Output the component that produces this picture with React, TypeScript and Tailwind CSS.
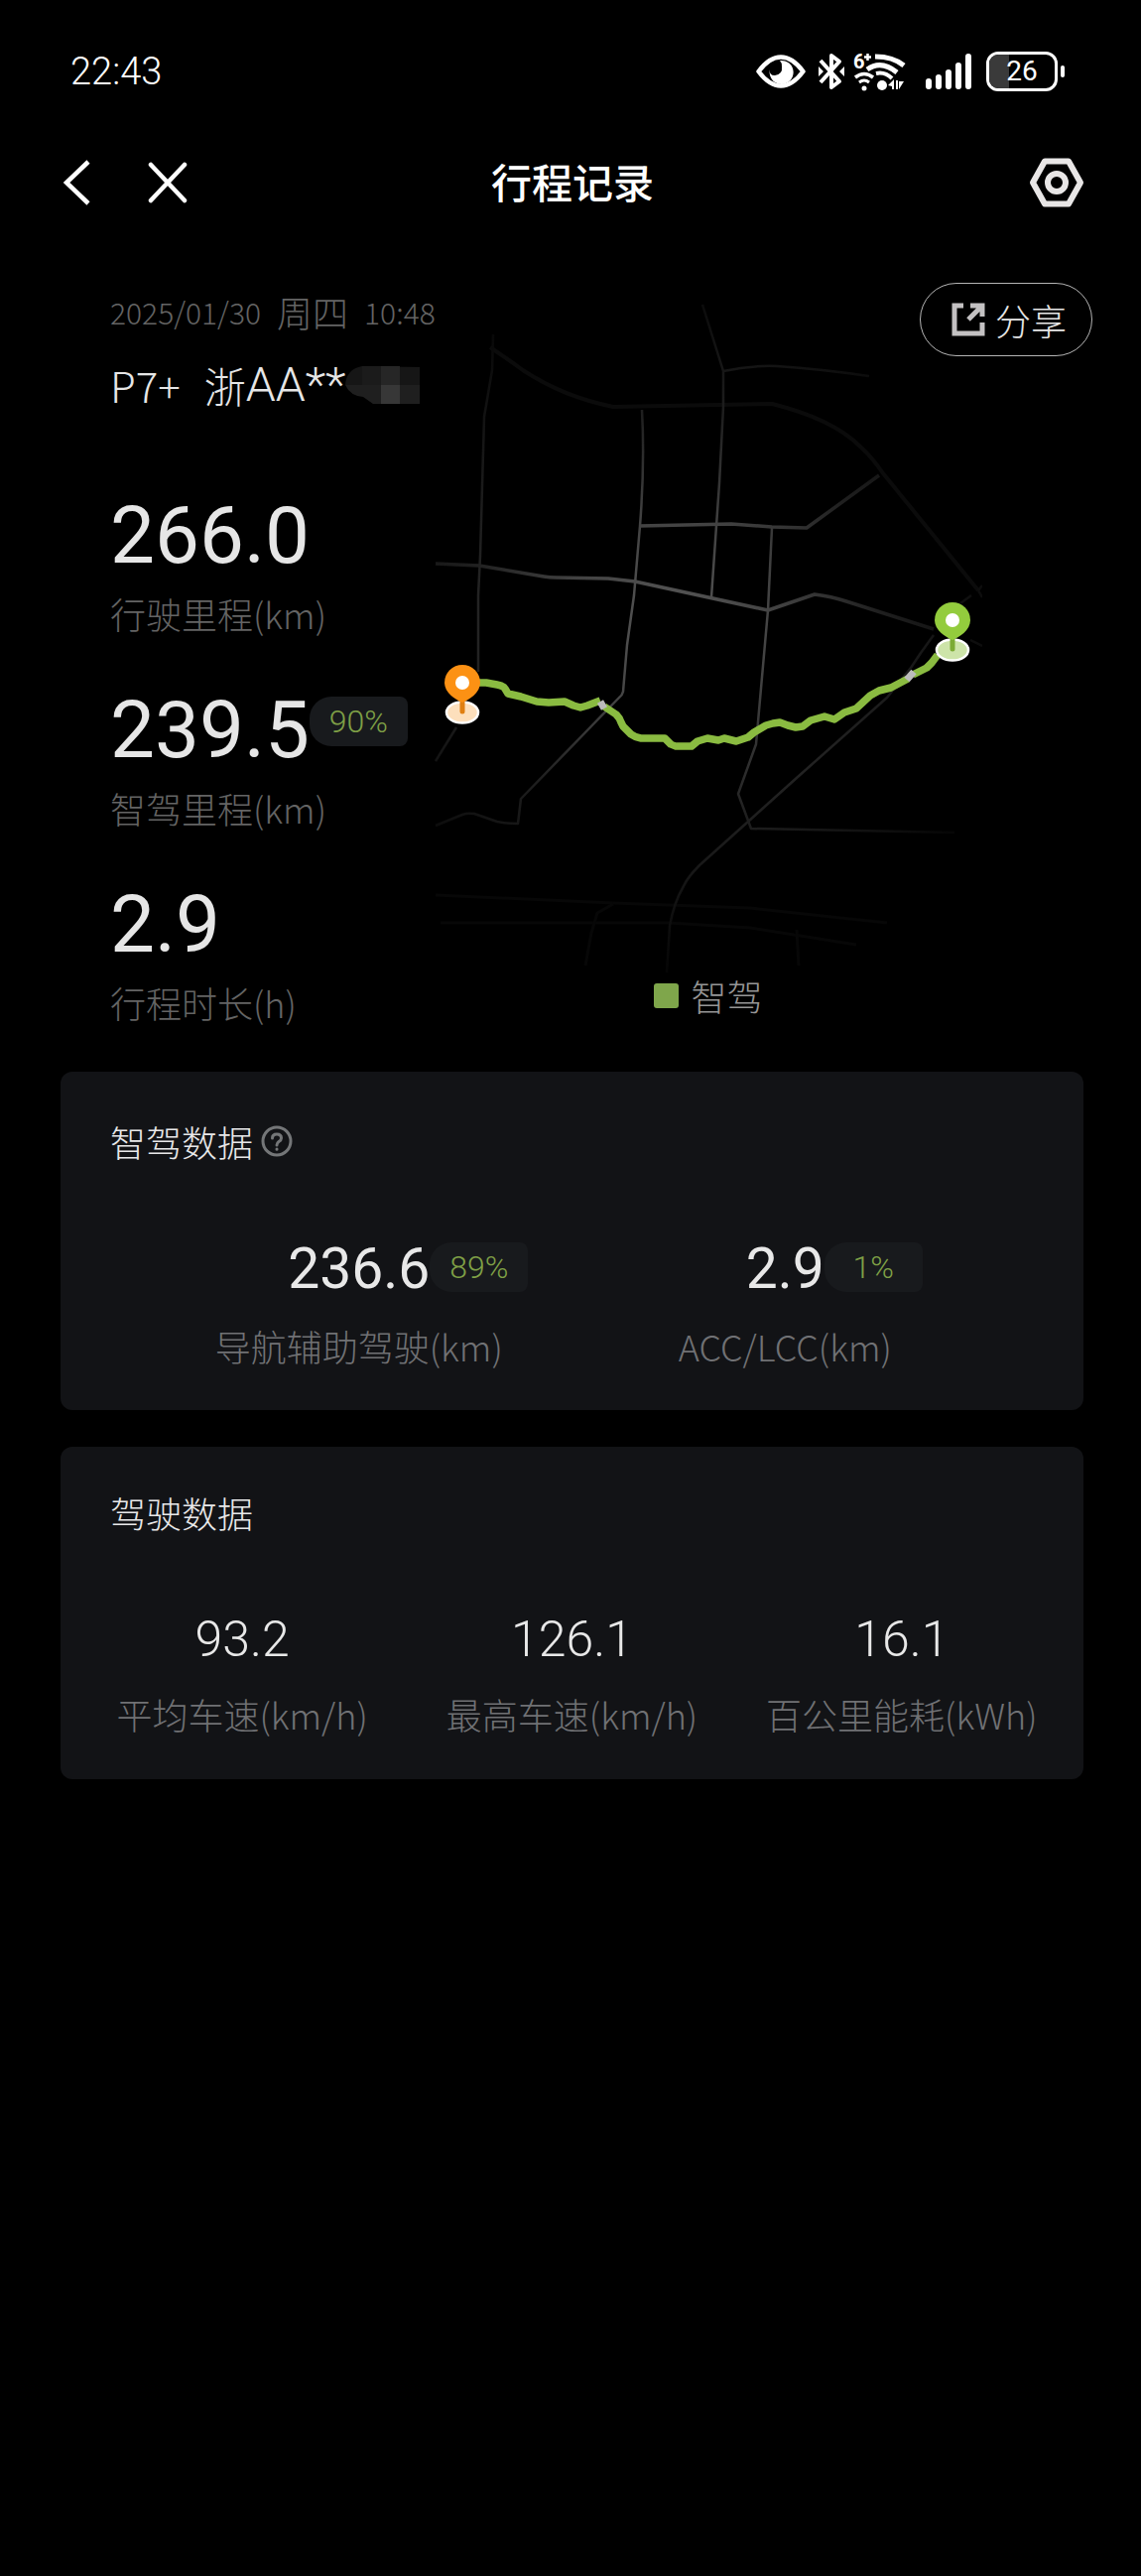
import React from 'react';
import { clsx } from 'clsx';

const cjk = "font-['Noto_Sans_CJK_SC','Noto_Sans',sans-serif]";
const roboto = "font-['Roboto','Noto_Sans_CJK_SC',sans-serif]";

const summary = [
  { value: '266.0', label: '行驶里程(km)' },
  { value: '239.5', label: '智驾里程(km)', percent: '90%' },
  { value: '2.9', label: '行程时长(h)' },
];

const assistStats = [
  { value: '236.6', label: '导航辅助驾驶(km)', percent: '89%' },
  { value: '2.9', label: 'ACC/LCC(km)', percent: '1%' },
];

const driveStats = [
  { value: '93.2', label: '平均车速(km/h)' },
  { value: '126.1', label: '最高车速(km/h)' },
  { value: '16.1', label: '百公里能耗(kWh)' },
];

const roads = [
  'M59 37L58 73L50 120L46 260L44 300L44 377',
  'M270 7L291 74L291 110L287 187L279 302',
  'M291 74Q318 68 345 69Q390 72 438 79',
  'M209 113Q212 167 207 230L201 300L194 350L190 397Q189 401 186 403L87 505L84 530Q72 530 63 528L40 520Q33 519 28 521L1 532',
  'M340 232L336 315L324 450L306 500L319 535L524 539',
  'M22 433L1 467',
  'M503 340L490 358L480 373L456 403L366 483L267 572Q255 584 251 593Q241 610 237 633L234 680',
  'M541 300L530 308M548 295L552 290M548 295L552 302M540 345L552 351',
];

const wideRoads = [
  'M207 230L299 228L340 231L375 232L448 179',
  'M1 268L45 270L110 281Q116 282 122 282L175 283L202 286L336 315L383 299Q400 301 415 306L503 334',
];

const ringRoad = 'M56 50Q74 62 89 73Q130 100 180 110L340 107Q401 122 429 150Q442 162 452 177L548 295';

const faintRoads = [
  'M1 602L180 610L318 615L456 630',
  'M6 630L235 630L318 635L425 652',
  'M180 611L164 620L158 640L152 673',
  'M365 637L367 673',
];

function EyeIcon() {
  return (
    <svg viewBox="0 0 50 34" className="h-[34px] w-[50px]">
      <path d="M2.5 17C10 7 17 2.5 25 2.5S40 7 47.500 17C40 27 33 31.500 25 31.500S10 27 2.500 17Z" fill="none" stroke="#fff" strokeWidth="4.500" strokeLinejoin="round" />
      <path d="M24 6A12 12 0 1 1 14 15Q13 21 19 21Q27 20 26 12Q26 8 24 6Z" fill="#fff" />
    </svg>
  );
}

function BluetoothIcon() {
  return (
    <svg viewBox="0 0 28 40" className="h-10 w-7" fill="none" stroke="#fff" strokeWidth="4" strokeLinejoin="round">
      <path d="M3 9L22 30L14 36V4L22 10L3 31" />
      <path d="M1 15L6 20L1 25ZM27 15L22 20L27 25Z" fill="#fff" stroke="none" />
    </svg>
  );
}

function WifiIcon() {
  return (
    <svg viewBox="-2 -6 57 52" className="h-[52px] w-[57px]" fill="none" stroke="#fff" strokeWidth="4">
      <text x="0" y="17" fill="#fff" stroke="none" fontSize="20" fontWeight="700" fontFamily="Roboto, sans-serif">6</text>
      <path d="M11 5.500H18M14.500 2V9" strokeWidth="2.500" />
      <path d="M22 5Q40 5 51 14" strokeWidth="5" />
      <path d="M14 18Q28 8 44 21" strokeWidth="5" />
      <path d="M23 22Q32 20 39 27" />
      <path d="M2 26Q11 19 20 26" strokeWidth="3.500" />
      <path d="M6 31Q11 27 16 31" strokeWidth="3" />
      <circle cx="11" cy="37" r="2.500" fill="#fff" stroke="none" />
      <circle cx="29" cy="34" r="5" fill="#fff" stroke="none" />
      <path d="M35 34L41 28V38H39V35ZM43 29H45V38H43ZM46 30H51L46 38Z" fill="#fff" stroke="none" />
    </svg>
  );
}

function SignalIcon() {
  return (
    <svg viewBox="0 0 47 38" className="h-[38px] w-[47px]" stroke="#fff" strokeWidth="6" strokeLinecap="round">
      <path d="M3 29V34M13 25V34M23 20V34M33 13V34M43 4V34" />
    </svg>
  );
}

function Battery() {
  return (
    <div className="flex items-center gap-[3px]">
      <div className="relative flex h-10 w-[72px] items-center justify-center overflow-hidden rounded-[12px] border-[3px] border-white">
        <span className="absolute inset-y-0 left-0 w-5 bg-[#3a3a3a]" />
        <span className={clsx('relative text-[28px] leading-none text-white', roboto)}>26</span>
      </div>
      <span className="h-3 w-1 rounded-full bg-white" />
    </div>
  );
}

function StatusBar() {
  return (
    <div className="flex h-36 items-center justify-between pr-[77px] pl-[71px]">
      <span className={clsx('text-[38px] leading-none font-light text-white', roboto)}>22:43</span>
      <div className="flex items-center">
        <EyeIcon />
        <span className="ml-3">
          <BluetoothIcon />
        </span>
        <span className="ml-1.5">
          <WifiIcon />
        </span>
        <span className="ml-[18px]">
          <SignalIcon />
        </span>
        <span className="ml-3.5">
          <Battery />
        </span>
      </div>
    </div>
  );
}

function Header() {
  return (
    <header className="grid h-20 grid-cols-[1fr_auto_1fr] items-center pr-[57px] pl-[61px]">
      <div className="flex items-center gap-14">
        <button aria-label="返回">
          <svg viewBox="0 0 32 46" className="h-[46px] w-8" fill="none" stroke="#fff" strokeWidth="4.500">
            <path d="M28 2L6 23L28 44" />
          </svg>
        </button>
        <button aria-label="关闭">
          <svg viewBox="0 0 40 42" className="h-[42px] w-10" fill="none" stroke="#fff" strokeWidth="4.500" strokeLinecap="round">
            <path d="M3 3L37 39M37 3L3 39" />
          </svg>
        </button>
      </div>
      <h1 className="pb-1 text-[41px] leading-none font-medium text-white">行程记录</h1>
      <button aria-label="设置" className="justify-self-end">
        <svg viewBox="0 0 56 50" className="h-[50px] w-14" fill="none" stroke="#e8e6e6" strokeWidth="6" strokeLinejoin="round">
          <path d="M16 3.500H40L52 25L40 46.500H16L4 25Z" />
          <circle cx="28" cy="25" r="9" />
        </svg>
      </button>
    </header>
  );
}

function PercentTag({ className, children }: { className: string; children: React.ReactNode }) {
  return (
    <span
      className={clsx(
        'absolute left-full flex h-[50px] w-[99px] items-center justify-center rounded-l-[22px] rounded-r-[8px] bg-[#181a1d] text-[32px] leading-none font-light text-[#7fa046]',
        roboto,
        className
      )}
    >
      {children}
    </span>
  );
}

function MapPin({ x, y, color, stem, base }: { x: number; y: number; color: string; stem: string; base: string }) {
  return (
    <g transform={`translate(${x} ${y})`}>
      <ellipse cx="0" cy="30" rx="16" ry="10.500" fill={base} stroke="#fff" strokeWidth="2.500" />
      <path d="M0 16V29" stroke={stem} strokeWidth="5" strokeLinecap="round" />
      <path d="M0 20C-7 17 -18 10 -18 0A18 18 0 0 1 18 0C18 10 7 17 0 20Z" fill={color} />
      <circle r="7" fill="#fff" />
    </g>
  );
}

function RouteMap() {
  return (
    <svg viewBox="0 0 552 680" className="w-full" fill="none" strokeLinejoin="round" role="img" aria-label="行程路线">
      <defs>
        <radialGradient id="roadFade" gradientUnits="userSpaceOnUse" cx="240" cy="325" r="350">
          <stop offset="0" stopColor="#565656" />
          <stop offset="0.300" stopColor="#424242" />
          <stop offset="0.600" stopColor="#1f1f1f" />
          <stop offset="1" stopColor="#060606" />
        </radialGradient>
      </defs>
      <path d={ringRoad} stroke="#0b0b0b" strokeWidth="4" />
      {faintRoads.map((d) => (
        <path key={d} d={d} stroke="#070707" strokeWidth="3" />
      ))}
      <g stroke="url(#roadFade)">
        {roads.map((d) => (
          <path key={d} d={d} strokeWidth="2.500" />
        ))}
        {wideRoads.map((d) => (
          <path key={d} d={d} strokeWidth="3.500" />
        ))}
      </g>
      <g stroke="#8abb41" strokeWidth="7.500">
        <path d="M38 388L52 388L63 390Q69 391 71 394L74 399L87 402L103 407L115 408L131 407L140 411L147 413L154 411L167 406" />
        <path d="M171 412L183 420Q187 424 188 428L190 432L198 440Q202 443 208 444L232 444L238 450Q240 451 243 452L259 452L265 447L275 444L286 446L292 444L304 447L316 443L322 438L334 431L341 429L348 428L356 431L364 433L371 432L379 426L393 422L403 425L413 418L425 414L439 401L448 396L460 393L477 384" />
        <path d="M482 380L496 373L501 368L507 360" />
      </g>
      <path d="M167 407L171 414M476 385L483 377" stroke="#bcbcbc" strokeWidth="7" />
      <MapPin x={28} y={388} color="#fc9114" stem="#e07f12" base="#fddfbc" />
      <MapPin x={522} y={325} color="#93cc3d" stem="#7cab34" base="#cde4a9" />
    </svg>
  );
}

// Masked part of the plate number
function PlateMask() {
  return (
    <svg viewBox="0 0 75 38" className="h-[38px] w-[75px]" aria-hidden="true">
      <path d="M17 0L75 1V19H0Q1 3 17 0Z" fill="#161616" />
      <path d="M0 19H75V38H28L18 31Q5 30 0 19Z" fill="#1f1f1f" />
      <path d="M17 0H36V19H17Z" fill="#1b1b1b" />
      <path d="M36 0H55V19H36Z" fill="#262626" />
      <path d="M36 19H55V38H36Z" fill="#373737" />
    </svg>
  );
}

function Overview() {
  return (
    <section className="relative flex pt-[60px] pr-40 pl-[111px]">
      <div className="w-[327px] shrink-0">
        <p className="flex h-16 items-center gap-4 pb-1 leading-none font-light whitespace-nowrap text-[#646464]">
          <span className="text-[30px]">2025/01/30</span>
          <span className="text-[36px]">周四</span>
          <span className="text-[30px]">10:48</span>
        </p>
        <p className="flex h-20 items-center text-[42px] leading-none font-light whitespace-nowrap text-[#e6e6e6]">
          <span className="mr-6">P7+</span>
          浙<span className={clsx('text-[48px]', roboto)}>AA**</span>
          <PlateMask />
        </p>
        <dl className="mt-[66px] flex flex-col gap-8">
          {summary.map((item) => (
            <div key={item.label} className="flex flex-col-reverse">
              <dt className="flex h-[76px] items-center pb-1 text-[36px] leading-none font-light text-[#646464]">{item.label}</dt>
              <dd className={clsx('relative flex h-[88px] w-fit items-center pt-1 text-[80px] leading-none text-[#e6e6e6]', roboto)}>
                {item.value}
                {item.percent && <PercentTag className="top-3">{item.percent}</PercentTag>}
              </dd>
            </div>
          ))}
        </dl>
      </div>
      <div className="min-w-0 flex-1 pt-4">
        <RouteMap />
        <p className="flex h-[46px] items-center justify-center gap-3 text-[36px] leading-none font-light text-[#969696]">
          <span className="size-[25px] rounded-[3px] bg-[#7fa64b]" />
          智驾
        </p>
      </div>
      <button className="absolute top-[61px] right-[49px] flex h-[74px] w-[174px] items-center justify-center gap-2.5 rounded-full border border-[#b5b5b5] pl-1.5 text-[36px] leading-none font-light text-[#e6e6e6]">
        <svg viewBox="0 0 34 34" className="size-[34px]" fill="none" stroke="#c3c1c2" strokeWidth="5">
          <path d="M12 3H3V31H31V20" />
          <path d="M17 17L30 4M19 3H31V14" />
        </svg>
        分享
      </button>
    </section>
  );
}

function Card({ className, children }: { className?: string; children: React.ReactNode }) {
  return <section className={clsx('rounded-[12px] bg-[#121316]', className)}>{children}</section>;
}

function HelpIcon() {
  return (
    <svg viewBox="0 0 32 32" className="size-8" fill="none" stroke="#747678" strokeWidth="3" strokeLinecap="round">
      <circle cx="16" cy="16" r="14" />
      <path d="M11.500 13Q11.500 9 16 9T20.500 13Q20.500 15 18 16.500Q16 18 16 20M16 24V24.200" />
    </svg>
  );
}

export default function App() {
  return (
    <main className={clsx('min-h-screen bg-black', cjk)}>
      <StatusBar />
      <Header />
      <Overview />

      <div className="mt-[30px] flex flex-col gap-[37px] pr-[58px] pl-[61px]">
        <Card className="pt-[42px] pb-[35px]">
          <div className="flex h-14 items-center gap-2 pl-[50px]">
            <h2 className="text-[36px] leading-none font-light text-[#e8e8e9]">智驾数据</h2>
            <button aria-label="智驾数据说明">
              <HelpIcon />
            </button>
          </div>
          <dl className="mt-[70px] grid grid-cols-2 px-[86px]">
            {assistStats.map((item) => (
              <div key={item.label} className="flex flex-col-reverse items-center gap-[22px]">
                <dt className="flex h-14 items-center pb-1 text-[36px] leading-none font-light whitespace-nowrap text-[#707174]">{item.label}</dt>
                <dd className={clsx('relative flex h-[60px] items-center text-[57px] leading-none text-[#e8e8e8]', roboto)}>
                  {item.value}
                  <PercentTag className="top-1">{item.percent}</PercentTag>
                </dd>
              </div>
            ))}
          </dl>
        </Card>

        <Card className="pt-[38px] pb-9">
          <h2 className="flex h-14 items-center pl-[50px] text-[36px] leading-none font-light text-[#e8e8e9]">驾驶数据</h2>
          <dl className="mt-[70px] grid grid-cols-3 px-[17px]">
            {driveStats.map((item) => (
              <div key={item.label} className="flex flex-col-reverse items-center gap-[19px]">
                <dt className="flex h-14 items-center pb-1 text-[36px] leading-none font-light whitespace-nowrap text-[#707174]">{item.label}</dt>
                <dd className={clsx('flex h-[60px] items-center text-[50px] leading-none font-light text-[#e8e8e8]', roboto)}>{item.value}</dd>
              </div>
            ))}
          </dl>
        </Card>
      </div>
    </main>
  );
}
